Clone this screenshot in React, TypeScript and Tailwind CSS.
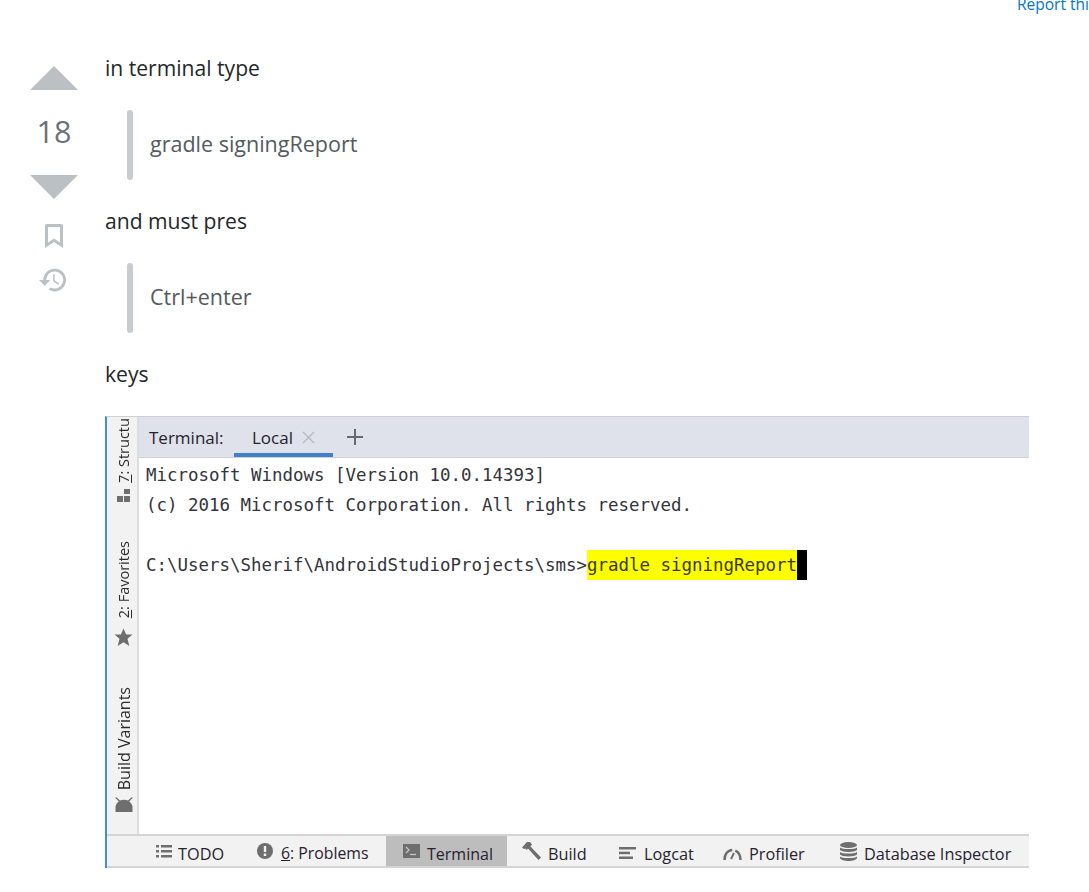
const sans = "font-['Open_Sans','Noto_Sans',sans-serif]";

const Quote = ({ text }: { text: string }) => (
  <div className="flex h-[70px] ml-[22px] mt-[27px] mb-[26px]">
    <div className="w-[6px] rounded-[3px] bg-[#c8ccd0]" />
    <div className="flex items-center pl-[17px] pb-[2px] text-[21.500px] text-[#535a60]">{text}</div>
  </div>
);

const VoteColumn = () => (
  <div className="w-[105px] shrink-0 pl-[30px] pt-[13px]">
    <div className="w-[48px] flex flex-col items-center text-[#bbc0c4]">
      <svg width="48" height="24" viewBox="0 0 48 24"><path d="M0 24 L24 0 L48 24 Z" fill="currentColor" /></svg>
      <div className="h-[85px] flex items-center pb-[2px] text-[30.500px] leading-none text-[#6a737c]">18</div>
      <svg width="48" height="24" viewBox="0 0 48 24"><path d="M0 0 L48 0 L24 24 Z" fill="currentColor" /></svg>
      <svg className="mt-[25px]" width="18" height="24" viewBox="0 0 18 24">
        <path fillRule="evenodd" d="M2 0h14a2 2 0 0 1 2 2v22l-9-6-9 6V2a2 2 0 0 1 2-2zm1 3v15.500l6-4 6 4V3H3z" fill="currentColor" />
      </svg>
      <svg className="mt-[19px] -ml-[4px]" width="27" height="26" viewBox="0 0 19 18">
        <path d="M3 9a8 8 0 113.730 6.770L8.200 14.300A6 6 0 105 9l3.010-.010-4 4-4-4h3L3 9zm7-4h1.010L11 9.360l3.220 2.100-.600.930L10 10V5z" fill="currentColor" />
      </svg>
    </div>
  </div>
);

const VText = ({ children, big }: { children: React.ReactNode; big?: boolean }) => (
  <span className={`[writing-mode:vertical-rl] rotate-180 whitespace-nowrap leading-[18px] text-[#2b2b2b] ${big ? "text-[16px] font-medium" : "text-[14.500px]"}`}>
    {children}
  </span>
);

const SideBar = () => (
  <div className={`w-[32px] shrink-0 flex flex-col items-center bg-[#f2f2f2] border-r-2 border-[#dcdcdc] pl-[3px] ${sans}`}>
    <div className="h-[86px] w-full overflow-hidden flex flex-col items-center justify-end">
      <VText><span className="underline">7</span>: Structure</VText>
      <svg className="mt-[5px] shrink-0" width="15" height="15" viewBox="0 0 15 15" fill="#6e6e6e">
        <rect x="8" y="1" width="6" height="5" /><rect x="1" y="8" width="6" height="6" /><rect x="8" y="8" width="6" height="6" />
      </svg>
    </div>
    <div className="mt-[38px] flex flex-col items-center">
      <VText><span className="underline">2</span>: Favorites</VText>
      <svg className="mt-[10px]" width="19" height="19" viewBox="0 0 19 19"><path d="M9.500 0.500l2.600 6h6.400l-5 4.200 1.800 7.300-5.800-3.800-5.800 3.800 1.800-7.300-5-4.200h6.400z" fill="#6e6e6e" /></svg>
    </div>
    <div className="mt-[40px] flex flex-col items-center">
      <VText big>Build Variants</VText>
      <svg className="mt-[7px]" width="18" height="15" viewBox="0 0 18 15" fill="#6e6e6e">
        <path d="M1 0l4 3.500c2.500-1 5.500-1 8 0L17 0l.700.700-3.500 3.800c1.800 1 3 3 3.300 5v5.500H.500V9.500C.800 7.500 2 5.500 3.800 4.500L.300.700z" />
      </svg>
    </div>
  </div>
);

const TermIcon = () => (
  <svg width="17" height="14" viewBox="0 0 17 14">
    <rect width="17" height="14" fill="#6e6e6e" />
    <path d="M3 3l3 3-3 3" stroke="#c4c4c4" strokeWidth="1.300" fill="none" />
    <path d="M7 10.500h6" stroke="#c4c4c4" strokeWidth="1.300" />
  </svg>
);

const BottomBar = () => (
  <div className={`h-[34px] shrink-0 flex bg-[#f2f2f2] border-y-2 border-[#d4d4d4] text-[16.300px] leading-none text-[#26222e] whitespace-nowrap pl-[49px] ${sans}`}>
    <div className="w-[101px] flex items-center gap-[6px]">
      <svg width="16" height="13" viewBox="0 0 16 13" fill="#6e6e6e">
        <rect y="0" width="3" height="2.500" /><rect y="5" width="3" height="2.500" /><rect y="10" width="3" height="2.500" />
        <rect x="5" y="0" width="11" height="2.500" /><rect x="5" y="5" width="11" height="2.500" /><rect x="5" y="10" width="11" height="2.500" />
      </svg>
      <span className="pt-[6px]">TODO</span>
    </div>
    <div className="w-[129px] flex items-center gap-[8px]">
      <svg className="-mt-[1px]" width="16" height="16" viewBox="0 0 16 16">
        <circle cx="8" cy="8" r="8" fill="#6e6e6e" />
        <rect x="6.800" y="3" width="2.400" height="6" fill="#f2f2f2" /><rect x="6.800" y="10.500" width="2.400" height="2.500" fill="#f2f2f2" />
      </svg>
      <span className="pt-[6px] text-[15.800px]"><span className="underline">6</span>: Problems</span>
    </div>
    <div className="w-[121px] flex items-center gap-[7px] pl-[17px] bg-[#bdbdbd]">
      <TermIcon />
      <span className="pt-[6px] text-[16px]">Terminal</span>
    </div>
    <div className="ml-[15px] w-[97px] flex items-center gap-[7px]">
      <svg className="-mt-[1px]" width="19" height="18" viewBox="0 0 19 18" fill="#6e6e6e">
        <path d="M0 5.500L5 0h3l2 2.500-1.500 2 10.500 11-2.500 2.500-10.500-11.500-1.500 1.500-1-1.500-1.500.500z" />
      </svg>
      <span className="pt-[6px]">Build</span>
    </div>
    <div className="w-[104px] flex items-center gap-[8px]">
      <svg className="mt-[4px]" width="17" height="12" viewBox="0 0 17 12" fill="#6e6e6e">
        <rect width="17" height="2.500" /><rect y="4.700" width="11" height="2.500" /><rect y="9.500" width="14" height="2.500" />
      </svg>
      <span className="pt-[6px]">Logcat</span>
    </div>
    <div className="w-[117px] flex items-center gap-[7px]">
      <svg className="mt-[6px]" width="19" height="12" viewBox="0 0 19 12" fill="none" stroke="#6e6e6e" strokeWidth="2.500">
        <path d="M1.500 12C1.500 6 5 2 9.500 2S17.500 6 17.500 12" strokeDasharray="14 3 30" />
        <path d="M8 11l3-6" strokeWidth="2" />
      </svg>
      <span className="pt-[6px]">Profiler</span>
    </div>
    <div className="flex items-center gap-[7px]">
      <svg width="17" height="19" viewBox="0 0 17 19" fill="#6e6e6e">
        <ellipse cx="8.500" cy="3" rx="8.500" ry="3" />
        <path d="M0 5.500c2 2 15 2 17 0V8c-2 2.500-15 2.500-17 0zM0 10c2 2 15 2 17 0v2.500c-2 2.500-15 2.500-17 0zM0 14.500c2 2 15 2 17 0V16c-1 4-16 4-17 0z" />
      </svg>
      <span className="pt-[6px]">Database Inspector</span>
    </div>
  </div>
);

const TabBar = () => (
  <div className={`h-[41px] shrink-0 flex items-stretch bg-[#dfe2ea] border-b border-[#d0d0d0] text-[#26222e] text-[17px] whitespace-nowrap ${sans}`}>
    <div className="w-[95px] flex items-center pl-[10px] pt-[2px]">Terminal:</div>
    <div className="w-[99px] flex items-center gap-[9px] pl-[18px] border-b-[4px] border-[#3f7fcc] pt-[5px]">
      <span>Local</span>
      <svg width="13" height="13" viewBox="0 0 13 13" stroke="#b4b8c0" strokeWidth="1.300"><path d="M1 1l11 11M12 1L1 12" /></svg>
    </div>
    <div className="flex items-center pl-[14px]">
      <svg width="16" height="16" viewBox="0 0 16 16" stroke="#666a70" strokeWidth="2"><path d="M8 0v16M0 8h16" /></svg>
    </div>
  </div>
);

const TerminalBody = () => (
  <div className="flex-1 bg-white pt-[2px] pl-[7px] font-['DejaVu_Sans_Mono',monospace] text-[17.440px] leading-[30px] text-[#33333d] whitespace-pre">
    <div>Microsoft Windows [Version 10.0.14393]</div>
    <div>(c) 2016 Microsoft Corporation. All rights reserved.</div>
    <div>&nbsp;</div>
    <div className="flex h-[30px]">
      <span>C:\Users\Sherif\AndroidStudioProjects\sms&gt;</span>
      <span className="bg-[#ffff00] text-[#3a3a10]">gradle signingReport</span>
      <span className="w-[10px] bg-black" />
    </div>
  </div>
);

const Shot = () => (
  <div className="w-[924px] h-[452px] flex flex-col border-t border-[#cfcfcf] border-l-2 border-l-[#3f8fdc] overflow-hidden blur-[0.3px]">
    <div className="flex flex-1 min-h-0">
      <SideBar />
      <div className="flex-1 flex flex-col min-w-0">
        <TabBar />
        <TerminalBody />
      </div>
    </div>
    <BottomBar />
  </div>
);

export default function App() {
  return (
    <div className={`w-[1089px] h-[892px] overflow-hidden bg-white text-[21.100px] text-[#242729] ${sans}`}>
      <div className="h-[53px] pl-[1017px] text-[15.500px] leading-[9px] text-[#0077cc] whitespace-nowrap overflow-hidden">Report this</div>
      <div className="flex">
        <VoteColumn />
        <div className="flex-1 min-w-0 leading-[30px]">
          <p>in terminal type</p>
          <Quote text="gradle signingReport" />
          <p>and must pres</p>
          <Quote text="Ctrl+enter" />
          <p className="mb-[27px]">keys</p>
          <Shot />
        </div>
      </div>
    </div>
  );
}
